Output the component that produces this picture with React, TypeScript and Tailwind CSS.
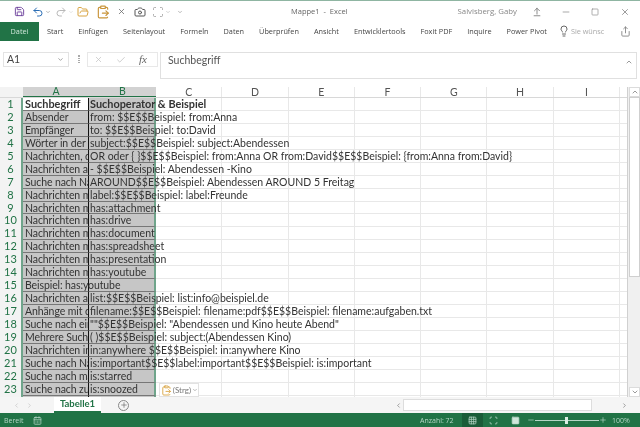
import React from "react";
import { Save, Undo2, Redo2, FolderOpen, X, Check, Camera, Lightbulb, Share, ChevronDown, Plus, Minus, Grid3x3, Square, ClipboardPaste, CalendarDays, ChevronUp, ChevronLeft, ChevronRight, Scan, ArrowUpFromLine } from "lucide-react";

const rows: [string, string][] = [
  ["Suchbegriff", "Suchoperator & Beispiel"],
  ["Absender", "from: $$E$$Beispiel: from:Anna"],
  ["Empfänger", "to: $$E$$Beispiel: to:David"],
  ["Wörter in der Betreffzeile", "subject:$$E$$Beispiel: subject:Abendessen"],
  ["Nachrichten, die", "OR oder { }$$E$$Beispiel: from:Anna OR from:David$$E$$Beispiel: {from:Anna from:David}"],
  ["Nachrichten aus", "- $$E$$Beispiel: Abendessen -Kino"],
  ["Suche nach Nachrichten", "AROUND$$E$$Beispiel: Abendessen AROUND 5 Freitag"],
  ["Nachrichten mit", "label:$$E$$Beispiel: label:Freunde"],
  ["Nachrichten mit", "has:attachment"],
  ["Nachrichten mit", "has:drive"],
  ["Nachrichten mit", "has:document"],
  ["Nachrichten mit", "has:spreadsheet"],
  ["Nachrichten mit", "has:presentation"],
  ["Nachrichten mit", "has:youtube"],
  ["Beispiel: has:youtube", ""],
  ["Nachrichten aus", "list:$$E$$Beispiel: list:info@beispiel.de"],
  ["Anhänge mit dem", "filename:$$E$$Beispiel: filename:pdf$$E$$Beispiel: filename:aufgaben.txt"],
  ["Suche nach einem", "\"\"$$E$$Beispiel: \"Abendessen und Kino heute Abend\""],
  ["Mehrere Suchbegriffe", "( )$$E$$Beispiel: subject:(Abendessen Kino)"],
  ["Nachrichten in", "in:anywhere $$E$$Beispiel: in:anywhere Kino"],
  ["Suche nach Nachrichten", "is:important$$E$$label:important$$E$$Beispiel: is:important"],
  ["Suche nach markierten", "is:starred"],
  ["Suche nach zurück", "is:snoozed"],
  ["", ""],
];
const tabs = ["Start", "Einfügen", "Seitenlayout", "Formeln", "Daten", "Überprüfen", "Ansicht", "Entwicklertools", "Foxit PDF", "Inquire", "Power Pivot"];
const cols = ["C", "D", "E", "F", "G", "H", "I"];

export default function App() {
  return (
    <div className="flex h-[427px] w-[640px] flex-col overflow-hidden border-t border-[#8fb5a2] bg-white text-[10.5px] leading-none text-[#333] blur-[0.4px] [font-family:Lato,'Open_Sans',sans-serif]">
      {/* Quick access + title */}
      <div className="flex h-[21px] shrink-0 items-center pl-[14px] pr-[10px] [font-family:'Open_Sans',sans-serif]">
        <Save size={11} className="mr-[7px] text-[#6a3d9a]" />
        <Undo2 size={12} className="text-[#2a6db5]" />
        <ChevronDown size={6} className="mx-[1px] text-[#777]" />
        <Redo2 size={12} className="ml-[3px] text-[#b8b8b8]" />
        <ChevronDown size={6} className="mx-[1px] text-[#ccc]" />
        <FolderOpen size={12} className="ml-[2px] text-[#d9a441]" />
        <ClipboardPaste size={14} className="ml-[7px] text-[#c9953a]" />
        <X size={9} className="ml-[7px] text-[#666]" />
        <Camera size={12} className="ml-[8px] text-[#555]" />
        <Scan size={12} className="ml-[6px] text-[#aaa]" />
        <ChevronDown size={6} className="mx-[1px] text-[#aaa]" />
        <ChevronDown size={6} className="ml-[5px] text-[#777]" />
        <div className="ml-[108px] flex-1 whitespace-nowrap text-[7.5px] text-[#666]">Mappe1&nbsp; -&nbsp; Excel</div>
        <div className="whitespace-nowrap text-[7.8px] text-[#888]">Salvisberg, Gaby</div>
        <ArrowUpFromLine size={10} className="ml-[15px] text-[#777]" />
        <Minus size={10} className="ml-[19px] text-[#999]" />
        <Square size={8} className="ml-[20px] text-[#888]" />
        <X size={10} className="ml-[21px] text-[#888]" />
      </div>
      {/* Ribbon tabs */}
      <div className="flex h-[20px] shrink-0 items-start text-[7.3px] text-[#444] [font-family:'Open_Sans',sans-serif]">
        <div className="flex h-[19px] w-[39px] shrink-0 items-center justify-center bg-[#217346] text-[#cfe6da]">Datei</div>
        <div className="ml-[8px] flex h-[19px] shrink-0 items-center gap-[15px] whitespace-nowrap">
          {tabs.map((t) => (
            <span key={t}>{t}</span>
          ))}
        </div>
        <Lightbulb size={12} className="ml-[11px] mt-[3px] shrink-0 text-[#666]" />
        <span className="ml-px mt-[6px] whitespace-nowrap text-[#aaa]">Sie wünsc</span>
        <Share size={11} className="ml-[16px] mt-[4px] shrink-0 text-[#888]" />
      </div>
      {/* Formula bar */}
      <div className="flex h-[45px] shrink-0 items-start pl-[3px] pr-[3px] pt-[10px]">
        <div className="flex h-[15px] w-[66px] items-center justify-between border border-[#e3e3e3] pl-[3px] pr-[4px] text-[#444]">
          A1
          <ChevronDown size={7} className="text-[#666]" />
        </div>
        <div className="ml-[9px] mt-[3px] h-[8px] w-[2px] border-x border-dotted border-[#aaa]" />
        <div className="ml-[7px] flex h-[15px] w-[71px] items-center gap-[13px] border border-[#e8e8e8] pl-[6px] text-[#c4c4c4]">
          <X size={9} />
          <Check size={10} />
          <span className="text-[11px] italic text-[#666] [font-family:'Liberation_Serif',serif]">fx</span>
        </div>
        <div className="ml-[2px] flex h-[27px] flex-1 items-start justify-between border border-[#e0e0e0] pl-[7px] pr-[3px] pt-[2px] text-[#555]">
          Suchbegriff
          <ChevronUp size={8} className="mt-[3px] text-[#666]" />
        </div>
      </div>
      {/* Grid */}
      <div className="flex min-h-0 flex-1">
        <div className="relative min-w-0 flex-1 overflow-hidden border-r border-[#d0d0d0]">
          <div className="flex h-[11px] items-center border-b border-[#d8d8d8] text-[10.5px] text-[#555]">
            <div className="h-full w-[23px] shrink-0 bg-[#f3f3f3]" />
            <div className="flex h-full w-[66px] shrink-0 items-center justify-center border-b border-[#217346] bg-[#d2d2d2] text-[#217346]">A</div>
            <div className="flex h-full w-[67px] shrink-0 items-center justify-center border-b border-[#217346] bg-[#d2d2d2] text-[#217346]">B</div>
            {cols.map((c) => (
              <div key={c} className="flex h-full w-[66.3px] shrink-0 items-center justify-center border-r border-[#e8e8e8]">
                {c}
              </div>
            ))}
          </div>
          {rows.map(([a, b], i) => {
            const first = i === 0;
            return (
              <div key={i} className={`flex h-[12.95px] whitespace-nowrap leading-[12px] text-[#333] ${first ? "text-[10.9px] font-bold" : ""}`}>
                <div className="w-[23px] shrink-0 border-r-2 border-[#6fa58b] bg-[#f3f3f3] text-center text-[11px] font-normal text-[#217346]">{i + 1}</div>
                <div className={`w-[66px] shrink-0 border-b border-r border-[#777] border-r-[#111] pl-[2px] ${first ? "bg-white" : "bg-[#c6c6c6] tracking-[-0.1px]"} ${b ? "overflow-hidden" : ""}`}>
                  {i === 14 ? <span className="relative z-10">{a}</span> : a}
                </div>
                <div className="w-[67px] shrink-0 border-b border-r-2 border-[#777] border-r-[#6fa58b] bg-[#c6c6c6] pl-[1px]">
                  <span className="relative z-10">{b}</span>
                </div>
                {cols.map((c) => (
                  <div key={c} className="w-[66.3px] shrink-0 border-b border-r border-[#e8e8e8]" />
                ))}
                <div className="flex-1 border-b border-[#e8e8e8]" />
              </div>
            );
          })}
          <div className="absolute left-[159px] top-[296px] z-20 flex h-[14px] w-[40px] items-center gap-[1px] border border-[#e2e2e2] bg-white pl-[1px] text-[8px] text-[#777]">
            <ClipboardPaste size={11} className="text-[#d9a441]" />
            (Strg)
            <ChevronDown size={6} />
          </div>
        </div>
        {/* Vertical scrollbar */}
        <div className="flex w-[12px] shrink-0 flex-col items-center bg-[#f0f0f0] pl-px">
          <div className="flex h-[10px] w-full items-center justify-center border border-[#dcdcdc] bg-white text-[#666]"><ChevronUp size={8} /></div>
          <div className="h-[180px] w-full border border-[#cfcfcf] bg-white" />
          <div className="flex-1" />
          <div className="flex h-[10px] w-full items-center justify-center border border-[#dcdcdc] bg-white text-[#666]"><ChevronDown size={8} /></div>
        </div>
      </div>
      {/* Sheet tabs */}
      <div className="flex h-[16px] shrink-0 items-stretch bg-[#f5f5f5] text-[#bbb]">
        <ChevronLeft size={7} className="ml-[13px] self-center" />
        <ChevronRight size={7} className="ml-[6px] self-center" />
        <div className="ml-[21px] flex w-[47px] items-center justify-center border-b-2 border-[#217346] bg-white text-[9.5px] font-bold text-[#217346]">Tabelle1</div>
        <div className="ml-[17px] flex h-[11px] w-[11px] items-center justify-center self-center rounded-full border border-[#888] text-[#666]"><Plus size={8} /></div>
        <div className="ml-[264px] flex w-[10px] items-center justify-center text-[#666]"><ChevronLeft size={7} /></div>
        <div className="my-[2px] w-[189px] border border-[#ddd] bg-white" />
        <div className="flex-1" />
        <div className="mr-[12px] flex w-[8px] items-center justify-center text-[#666]"><ChevronRight size={7} /></div>
      </div>
      {/* Status bar */}
      <div className="flex h-[14px] shrink-0 items-center whitespace-nowrap bg-[#217346] pl-[4px] text-[7px] text-[#b5d6c5] [font-family:'Open_Sans',sans-serif]">
        <span className="w-[18px]">Bereit</span>
        <CalendarDays size={9} className="ml-[11px]" />
        <span className="ml-[378px] w-[31px]">Anzahl: 72</span>
        <div className="ml-[11px] flex h-full w-[21px] items-center justify-center bg-[#1a5c38]"><Grid3x3 size={9} /></div>
        <Scan size={9} className="ml-[6px]" />
        <Square size={9} className="ml-[13px] fill-[#cfe6da]" />
        <Minus size={8} className="ml-[7px]" />
        <div className="relative h-px w-[64px] bg-[#b5d6c5]">
          <div className="absolute left-[30px] top-[-3px] h-[7px] w-[3px] bg-[#dbeee4]" />
        </div>
        <Plus size={8} />
        <span className="ml-[5px]">100%</span>
      </div>
    </div>
  );
}
